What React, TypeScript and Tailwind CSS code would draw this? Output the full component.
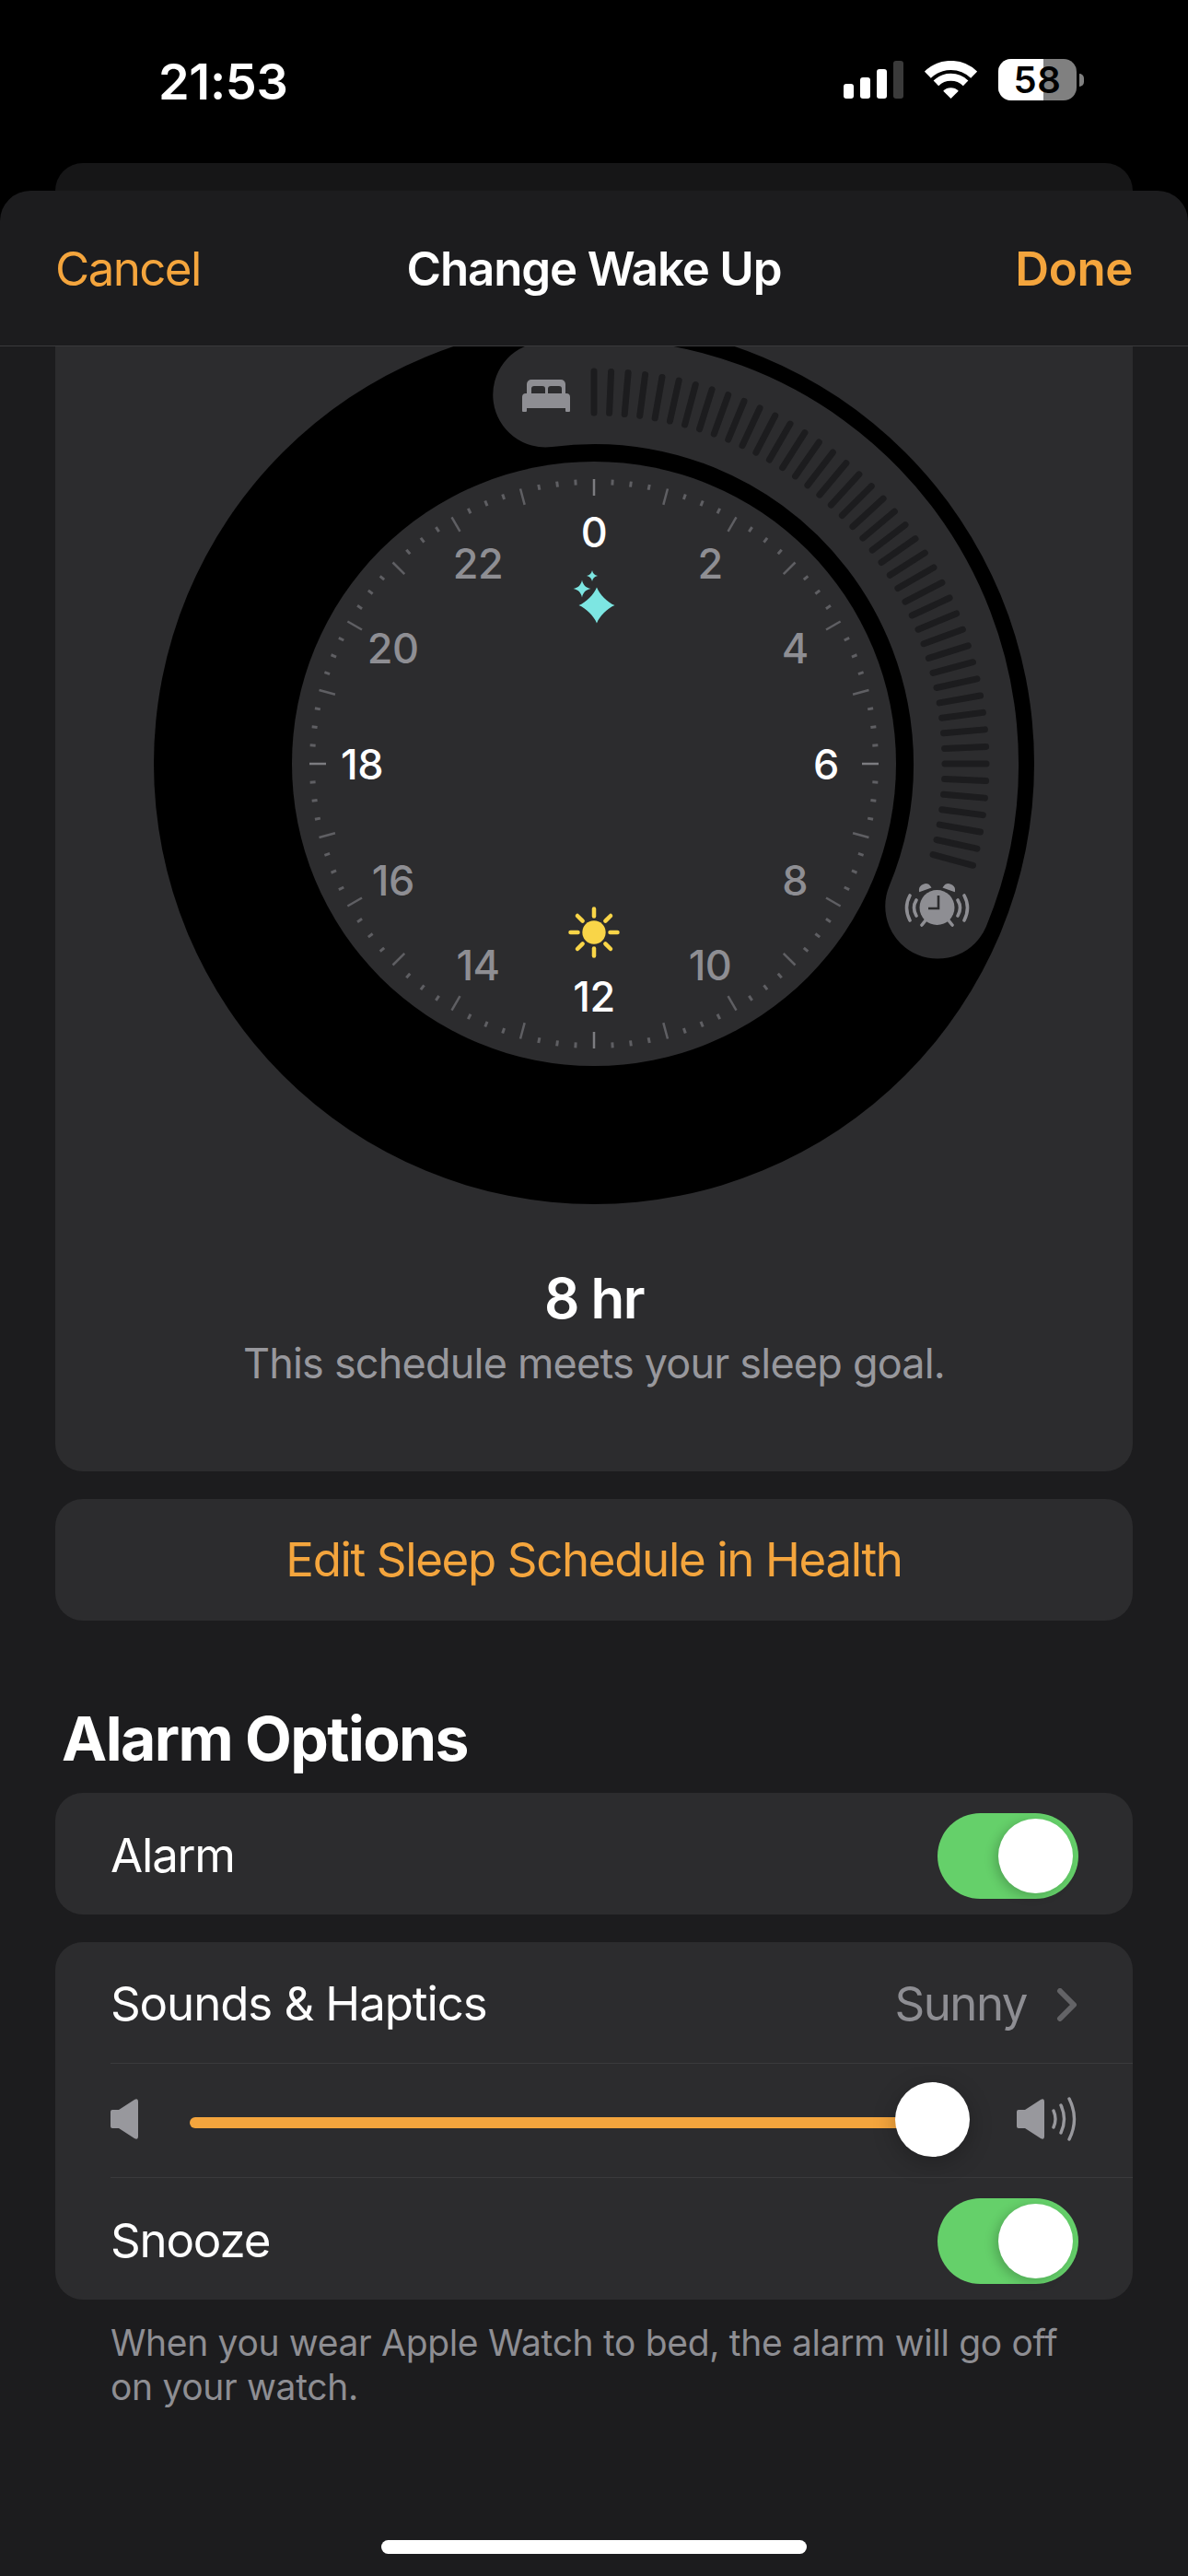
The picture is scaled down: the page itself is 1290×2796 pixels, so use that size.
const FONT = "font-['Inter','Noto_Sans',sans-serif]";

const CX = 645;
const CY = 829;

function polar(r: number, deg: number) {
  const a = ((deg - 90) * Math.PI) / 180;
  return { x: CX + r * Math.cos(a), y: CY + r * Math.sin(a) };
}

function Sparkle({ x, y, r, fat = 0.14 }: { x: number; y: number; r: number; fat?: number }) {
  const f = r * fat;
  return (
    <path
      fill="#7de6e2"
      d={`M${x} ${y - r} C${x + f * 0.5} ${y - f * 2.2} ${x + f * 2.2} ${y - f * 0.5} ${x + r} ${y} C${x + f * 2.2} ${y + f * 0.5} ${x + f * 0.5} ${y + f * 2.2} ${x} ${y + r} C${x - f * 0.5} ${y + f * 2.2} ${x - f * 2.2} ${y + f * 0.5} ${x - r} ${y} C${x - f * 2.2} ${y - f * 0.5} ${x - f * 0.5} ${y - f * 2.2} ${x} ${y - r}Z`}
    />
  );
}

function Dial() {
  const start = polar(404, -7.5);
  const end = polar(404, 112.5);
  const numbers = Array.from({ length: 12 }, (_, i) => i * 2);

  return (
    <svg viewBox="167 351 956 956" className="mx-auto block h-[956px] w-[956px] shrink-0">
      <circle cx={CX} cy={CY} r={478} fill="#000" />
      <path
        d={`M${start.x} ${start.y} A404 404 0 0 1 ${end.x} ${end.y}`}
        fill="none"
        stroke="#2c2c2e"
        strokeWidth={114}
        strokeLinecap="round"
      />
      {Array.from({ length: 43 }, (_, i) => {
        const a = polar(381, i * 2.5);
        const b = polar(426, i * 2.5);
        return (
          <line key={i} x1={a.x} y1={a.y} x2={b.x} y2={b.y} stroke="#1c1c1e" strokeWidth={7} strokeLinecap="round" />
        );
      })}

      <circle cx={CX} cy={CY} r={328} fill="#2c2c2e" />
      {Array.from({ length: 96 }, (_, i) => {
        const major = i % 4 === 0;
        const cardinal = i % 24 === 0;
        const a = polar(309, i * 3.75);
        const b = polar(major ? 291 : 303, i * 3.75);
        return (
          <line
            key={i}
            x1={a.x}
            y1={a.y}
            x2={b.x}
            y2={b.y}
            stroke={cardinal ? "#7c7c80" : "#5f5f63"}
            strokeWidth={major ? 2.5 : 3}
          />
        );
      })}
      {numbers.map((n) => {
        const p = polar(252, n * 15);
        const bright = n % 6 === 0;
        return (
          <text
            key={n}
            x={p.x}
            y={p.y + 17}
            textAnchor="middle"
            fontSize={45}
            fontWeight={500}
            letterSpacing={-0.5}
            fill={bright ? "#fff" : "#8e8e93"}
            fontFamily="Inter, sans-serif"
          >
            {n}
          </text>
        );
      })}

      <Sparkle x={648} y={657} r={19.5} fat={0.28} />
      <Sparkle x={632} y={639} r={9.5} fat={0.2} />
      <Sparkle x={643} y={625} r={6} fat={0.2} />

      <circle cx={645} cy={1012} r={12.7} fill="#f9d548" />
      {Array.from({ length: 8 }, (_, i) => {
        const t = (i * 45 * Math.PI) / 180;
        return (
          <line
            key={i}
            x1={645 + 17.5 * Math.sin(t)}
            y1={1012 - 17.5 * Math.cos(t)}
            x2={645 + 25.5 * Math.sin(t)}
            y2={1012 - 25.5 * Math.cos(t)}
            stroke="#f9d548"
            strokeWidth={4.5}
            strokeLinecap="round"
          />
        );
      })}

      {/* bed */}
      <g fill="#8e8e93">
        <path d="M577 412h32a5 5 0 0 1 5 5v11h-42v-11a5 5 0 0 1 5-5z" />
        <path d="M571 427h44a4 4 0 0 1 4 4v15a1 1 0 0 1-1 1h-3a1 1 0 0 1-1-1v-3h-42v3a1 1 0 0 1-1 1h-3a1 1 0 0 1-1-1v-15a4 4 0 0 1 4-4z" />
      </g>
      <path d="M577 427v-5a3 3 0 0 1 3-3h9a3 3 0 0 1 3 3v5zM595 427v-5a3 3 0 0 1 3-3h9a3 3 0 0 1 3 3v5z" fill="#2c2c2e" />

      {/* alarm */}
      <circle cx={1017.5} cy={985} r={19} fill="#8e8e93" />
      <path d="M1019 972v14h-11" fill="none" stroke="#2c2c2e" strokeWidth={2.6} />
      <path d="M999 967a6 6 0 0 1 11-4zM1036 967a6 6 0 0 0-11-4z" fill="#8e8e93" stroke="#8e8e93" strokeWidth={2} />
      <path
        d="M1005 999l-4 5M1030 999l4 5M988 972q-7 13 0 27M995 977q-5 8 0 17M1047 972q7 13 0 27M1040 977q5 8 0 17"
        fill="none"
        stroke="#8e8e93"
        strokeWidth={3.6}
        strokeLinecap="round"
      />
    </svg>
  );
}

function Toggle() {
  return (
    <div className="flex h-[93px] w-[153px] shrink-0 items-center justify-end rounded-full bg-[#65d06a] pr-[6px]">
      <div className="h-[81px] w-[81px] rounded-full bg-white shadow-[-4px_3px_12px_rgba(0,0,0,0.2)]" />
    </div>
  );
}

function Speaker({ className }: { className: string }) {
  return (
    <svg viewBox="0 0 30 44" className={className}>
      <path d="M0 14q0-2 2-2h7L26 1q4-2 4 2v38q0 4-4 2L9 32H2q-2 0-2-2z" fill="#98989d" />
    </svg>
  );
}

export default function App() {
  return (
    <div className={`${FONT} flex h-[2796px] w-[1290px] flex-col overflow-hidden bg-black text-white`}>
      {/* status bar */}
      <div className="flex h-[177px] shrink-0 justify-between pl-[172px] pr-[113px] pt-[64px]">
        <span className="mt-[2px] text-[54px] font-semibold leading-[46px] tracking-[-0.3px]">21:53</span>
        <div className="flex h-[45px] items-start gap-[23px]">
          <div className="mt-[2px] flex h-[41px] items-end gap-[7px]">
            <div className="h-[16px] w-[11px] rounded-[3px] bg-white" />
            <div className="h-[23px] w-[11px] rounded-[3px] bg-white" />
            <div className="h-[32px] w-[11px] rounded-[3px] bg-white" />
            <div className="h-[41px] w-[11px] rounded-[3px] bg-[#3a3a3a]" />
          </div>
          <svg viewBox="0 0 57 41" className="mt-[2px] h-[41px] w-[57px]">
            <g fill="none" stroke="#fff" strokeLinecap="butt">
              <path d="M3.3 15.2A36 36 0 0 1 53.7 15.2" strokeWidth={10} />
              <path d="M12.4 24.4A23 23 0 0 1 44.6 24.4" strokeWidth={8} />
            </g>
            <path d="M28.5 41L20.2 32.7A11.7 11.7 0 0 1 36.8 32.7z" fill="#fff" />
          </svg>
          <div className="flex items-center gap-[3px]">
            <div className="relative flex h-[45px] w-[85px] items-center justify-center rounded-[14px] bg-[#808080]">
              <div className="absolute inset-y-0 left-0 w-[49px] rounded-l-[14px] bg-white" />
              <span className="relative text-[40px] font-semibold leading-[45px] tracking-[0.5px] text-black">58</span>
            </div>
            <div className="h-[14px] w-[5px] rounded-r-full bg-[#808080]" />
          </div>
        </div>
      </div>

      <div className="mx-[60px] h-[30px] shrink-0 rounded-t-[30px] bg-[#161617]" />

      {/* sheet */}
      <div className="relative flex min-h-0 flex-1 flex-col rounded-t-[33px] bg-[#1c1c1e]">
        <header className="grid h-[169px] shrink-0 grid-cols-[1fr_auto_1fr] items-center border-b border-[#3a3a3c] px-[60px] pt-[2px]">
          <span className="text-[51px] tracking-[-1.6px] text-[#f4a53d]">Cancel</span>
          <span className="text-[51px] font-semibold tracking-[-1.15px]">Change Wake Up</span>
          <span className="text-right text-[51px] font-semibold tracking-[-0.4px] text-[#f4a53d]">Done</span>
        </header>

        <div className="flex min-h-0 flex-1 flex-col overflow-hidden px-[60px]">
          <section className="-mt-[30px] flex h-[1251px] shrink-0 flex-col overflow-hidden rounded-[30px] bg-[#2c2c2e] pt-[5px]">
            <Dial />
            <p className="mt-[68px] text-center text-[60px] font-semibold leading-[68px] tracking-[-1.5px]">8 hr</p>
            <p className="mt-[5px] text-center text-[45px] leading-[64px] tracking-[-0.8px] text-[#98989d]">
              This schedule meets your sleep goal.
            </p>
          </section>

          <button className="mt-[30px] h-[132px] shrink-0 rounded-[30px] bg-[#2c2c2e] text-[51px] tracking-[-1.35px] text-[#f4a53d]">
            Edit Sleep Schedule in Health
          </button>

          <h2 className="ml-[7px] mt-[92px] text-[66px] font-bold leading-[72px] tracking-[-1.6px]">Alarm Options</h2>

          <div className="mt-[23px] flex h-[132px] shrink-0 items-center justify-between rounded-[30px] bg-[#2c2c2e] pl-[60px] pr-[59px] pt-[4px]">
            <span className="text-[51px] tracking-[-1.2px]">Alarm</span>
            <Toggle />
          </div>

          <div className="mt-[30px] shrink-0 rounded-[30px] bg-[#2c2c2e] pl-[60px]">
            <div className="flex h-[132px] items-center justify-between border-b border-[#3a3a3c] pr-[59px] pt-[4px]">
              <span className="text-[51px] tracking-[-1.1px]">Sounds &amp; Haptics</span>
              <div className="flex items-center gap-[32px]">
                <span className="text-[51px] tracking-[-1.5px] text-[#8e8e93]">Sunny</span>
                <svg viewBox="0 0 24 36" className="h-[36px] w-[24px]">
                  <path d="M4 3l15 15L4 33" fill="none" stroke="#636366" strokeWidth={6} strokeLinecap="round" strokeLinejoin="round" />
                </svg>
              </div>
            </div>
            <div className="flex h-[124px] items-center border-b border-[#3a3a3c] pr-[60px] pt-[4px]">
              <Speaker className="mt-[-8px] h-[44px] w-[30px] shrink-0" />
              <div className="relative ml-[56px] mr-[91px] h-[12px] flex-1 rounded-full bg-[#f4a53d]">
                <div className="absolute right-[-40px] top-[-38px] h-[81px] w-[81px] rounded-full bg-white shadow-[0_6px_24px_rgba(0,0,0,0.25)]" />
              </div>
              <div className="mt-[-8px] flex shrink-0 items-center">
                <Speaker className="h-[44px] w-[30px]" />
                <svg viewBox="0 0 36 48" className="h-[48px] w-[36px]">
                  <path d="M10 15q4 9 0 18M18 9q7 15 0 30M27 2q11 22 0 44" fill="none" stroke="#98989d" strokeWidth={3.4} strokeLinecap="round" />
                </svg>
              </div>
            </div>
            <div className="flex h-[132px] items-center justify-between pr-[59px] pt-[4px]">
              <span className="text-[51px] tracking-[-1.2px]">Snooze</span>
              <Toggle />
            </div>
          </div>

          <p className="mt-[23px] px-[60px] text-[39px] leading-[48px] tracking-[-0.33px] text-[#8e8e93]">
            When you wear Apple Watch to bed, the alarm will go off on your watch.
          </p>
        </div>

        <div className="absolute bottom-[24px] left-[414px] h-[15px] w-[462px] rounded-full bg-white" />
      </div>
    </div>
  );
}
